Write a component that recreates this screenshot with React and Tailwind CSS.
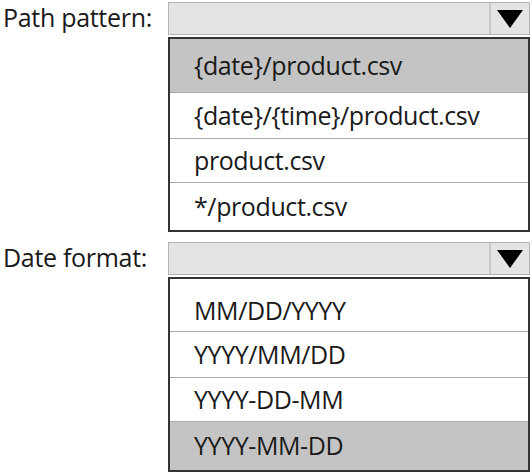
import React from 'react';

const pathOptions = ['{date}/product.csv', '{date}/{time}/product.csv', 'product.csv', '*/product.csv'];
const dateOptions = ['MM/DD/YYYY', 'YYYY/MM/DD', 'YYYY-DD-MM', 'YYYY-MM-DD'];

function Combo() {
  return (
    <div className="h-[33px] flex border border-[#b4b4b4] bg-[#e4e4e4]">
      <div className="flex-1" />
      <div className="w-[40px] border-l-2 border-[#c8c8c8] flex items-center justify-center">
        <svg width="26" height="18" viewBox="0 0 26 18">
          <polygon points="0,0 26,0 13,18" fill="#000" />
        </svg>
      </div>
    </div>
  );
}

function Dropdown({ label, options, selected, heights, first }) {
  return (
    <div className="flex">
      <div className="w-[168px] pl-[3px] text-[25px] leading-[30px] text-[#1a1a1a] tracking-[-0.3px]">{label}</div>
      <div className="w-[362px] flex flex-col gap-[2px]">
        <Combo />
        <div className="border-2 border-[#333] flex flex-col bg-white">
          {options.map((o, i) => (
            <div
              key={o}
              className={
                'flex items-center pl-[24px] text-[25px] tracking-[-0.4px] text-[#1a1a1a] ' +
                (i > 0 ? 'border-t border-[#a8a8a8] ' : '') +
                (i === selected ? 'bg-[#c4c4c4]' : 'bg-white')
              }
              style={{ height: heights[i], paddingTop: i === 0 ? first : 0 }}
            >
              {o}
            </div>
          ))}
        </div>
      </div>
    </div>
  );
}

export default function App() {
  return (
    <div className="w-[532px] h-[474px] bg-white pt-[2px] flex flex-col gap-[10px] font-['Segoe_UI','Open_Sans',sans-serif]">
      <Dropdown label="Path pattern:" options={pathOptions} selected={0} heights={[53, 46, 44, 48]} first={0} />
      <Dropdown label="Date format:" options={dateOptions} selected={3} heights={[52, 46, 44, 49]} first={12} />
    </div>
  );
}
